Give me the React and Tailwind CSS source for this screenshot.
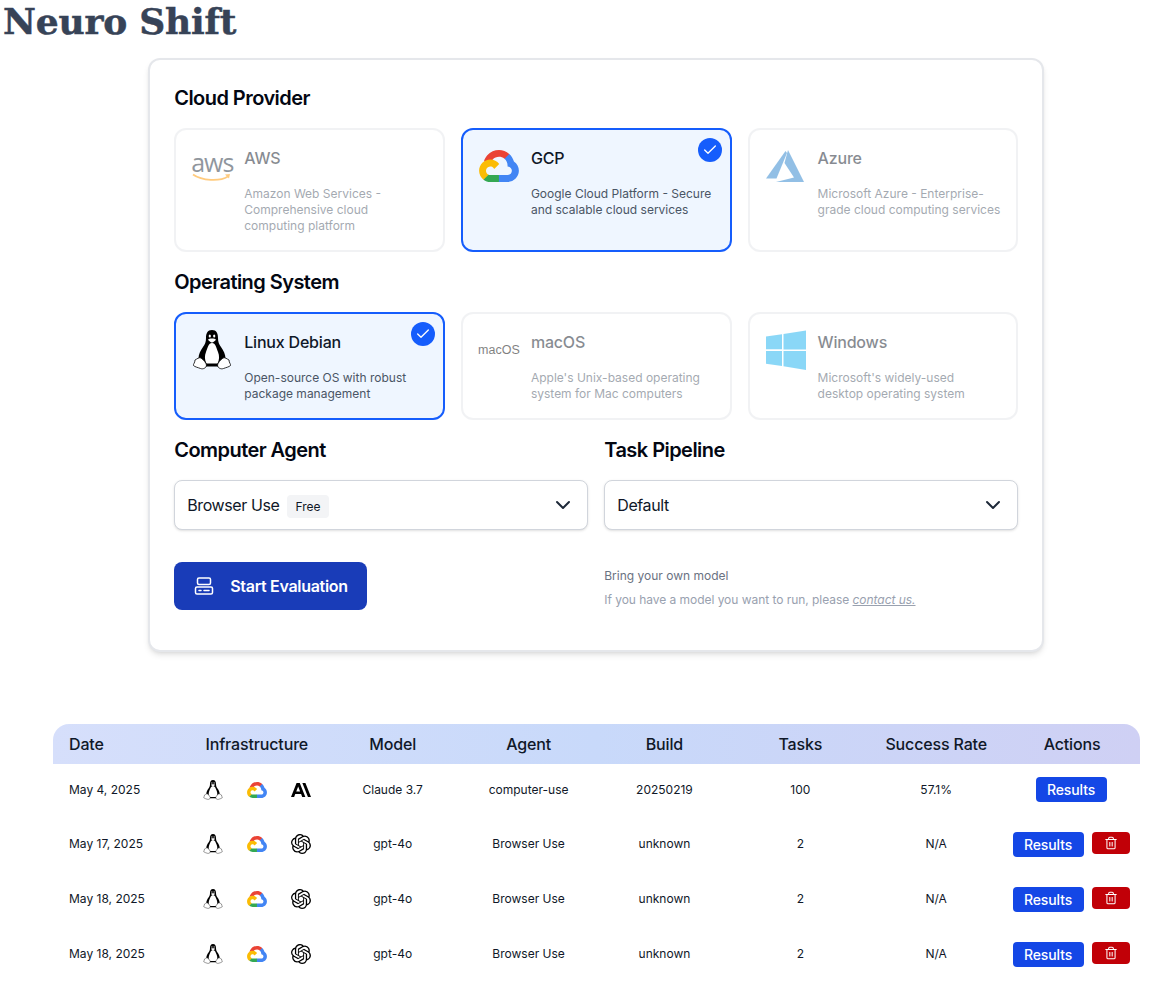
import React from "react";
import { ChevronDown, Check, Trash2 } from "lucide-react";
import { SiOpenai } from "react-icons/si";

function Gcp({ className }) {
  return (
    <svg viewBox="0 0 256 206" className={className}>
      <path fill="#EA4335" d="M170.252 56.819l22.253-22.253 1.483-9.37C153.437-11.677 88.976-7.496 52.42 33.92 42.267 45.423 34.734 59.764 30.717 74.573l7.97-1.123 44.505-7.34 3.436-3.513c19.797-21.742 53.27-24.667 76.128-6.168l7.496.39z" />
      <path fill="#4285F4" d="M224.205 73.918c-5.115-18.836-15.616-35.769-30.217-48.722l-31.232 31.232c13.188 10.776 20.701 27.01 20.379 44.037v5.544c15.351 0 27.797 12.445 27.797 27.796 0 15.352-12.446 27.485-27.797 27.485h-55.671l-5.466 5.934v33.34l5.466 5.231h55.671c39.93.311 72.552-31.494 72.863-71.424.188-24.203-11.745-46.893-31.793-60.453" />
      <path fill="#34A853" d="M71.87 205.796h55.593V161.29H71.87c-3.961-.001-7.797-.852-11.399-2.498l-7.887 2.42-22.409 22.253-1.952 7.574c12.567 9.489 27.9 14.825 43.647 14.757" />
      <path fill="#FBBC05" d="M71.87 61.425C31.939 61.664-.237 94.228.001 134.159c.133 22.298 10.547 43.288 28.222 56.88l32.248-32.247c-13.991-6.321-20.208-22.786-13.887-36.776 6.32-13.99 22.786-20.207 36.775-13.887 6.161 2.784 11.096 7.72 13.887 13.887l32.248-32.248c-13.72-17.937-35.04-28.424-57.624-28.343" />
    </svg>
  );
}

function Tux({ className, small }) {
  return (
    <svg viewBox="0 0 40 40" className={className}>
      <path fill="#000" d="M20 0C15.500 0 14 3.500 14 8c0 4-1 6-3 9C8.500 20.500 6.500 24 6.500 29L10 36.500h20L33.500 29c0-5-2-8.500-4.500-12-2-3-3-5-3-9 0-4.500-1.500-8-6-8z" />
      <path fill="#fff" d={small
        ? "M20 12c-4 0-5.500 5-7.500 10-1.500 3.500-1.500 8 .5 12h14c2-4 2-8.500.5-12C25.500 17 24 12 20 12z"
        : "M20 13c-3.500 0-4.500 5-6 9-1.500 3.500-1.500 8 .5 11.500h11c2-3.500 2-8 .5-11.500C24.500 18 23.500 13 20 13z"} />
      <path fill="#fff" d="M16.200 9.500c1-1.200 6.600-1.200 7.600 0 .4.900-2.800 3-3.800 3s-4.200-2.100-3.800-3z" />
      <ellipse cx="17.800" cy="6" rx="1.100" ry="1.500" fill="#fff" />
      <ellipse cx="22.200" cy="6" rx="1.100" ry="1.500" fill="#fff" />
      <path fill="#fff" stroke="#000" strokeWidth="0.800" d="M3 30c2-1 4-3 6-2 3 2 5 5 5.500 7 0 3-3.500 4.500-6 3.500-2.500-1-5.500-1.500-7-3-.5-1.500 1.500-2.500 1.500-5.500z" />
      <path fill="#fff" stroke="#000" strokeWidth="0.800" d="M37 30c-2-1-4-3-6-2-3 2-5 5-5.500 7 0 3 3.500 4.500 6 3.500 2.500-1 5.500-1.500 7-3 .5-1.500-1.500-2.500-1.500-5.500z" />
    </svg>
  );
}

function Anthropic({ className }) {
  return (
    <svg viewBox="0 3 24 18" className={className} fill="#000">
      <path d="M17.3041 3.541h-3.6718l6.696 16.918H24Zm-10.6082 0L0 20.459h3.7442l1.3693-3.5527h7.0052l1.3693 3.5528h3.7442L10.5363 3.5409Zm-.3712 10.2232 2.2914-5.9456 2.2914 5.9456Z" />
    </svg>
  );
}

function Aws() {
  return (
    <div className="flex flex-col items-center">
      <span className="text-[25px] leading-[22px] tracking-[-1px] text-[#232f3e] font-['Open_Sans',sans-serif]">aws</span>
      <svg viewBox="0 0 40 9" className="w-10 h-[9px]">
        <path d="M1 1.500C10 8 28 8.500 36 3.500" fill="none" stroke="#f90" strokeWidth="1.800" />
        <path d="M33 1.500l5-.5-1 4.500z" fill="#f90" />
      </svg>
    </div>
  );
}

function Azure() {
  return (
    <svg viewBox="0 0 39 32" className="w-[39px] h-8">
      <path fill="#2781cd" d="M19.500 1L0 28.500h10.500L21 3z" />
      <path fill="#2781cd" d="M22 0l16 32H10l18-4.500L18.500 13z" />
    </svg>
  );
}

function Windows() {
  return (
    <svg viewBox="0 0 40 40" className="w-10 h-10">
      <path fill="#18b1f1" d="M0 6.500l16-2.200v15H0zM17.500 4.100L40 .500v19H17.500zM0 21h16v15L0 33.700zM17.500 21H40v19l-22.500-3.700z" />
    </svg>
  );
}

function Tile({ icon, title, desc, selected }) {
  return (
    <div className={selected
      ? "relative flex rounded-xl border-2 border-blue-600 bg-blue-50 p-4"
      : "relative flex rounded-xl border-2 border-gray-200 bg-white p-4 opacity-50"}>
      <div className="w-10 h-10 mr-3 shrink-0 flex items-center justify-center">{icon}</div>
      <div>
        <div className="text-base font-medium tracking-[-0.2px] text-gray-900 mb-4">{title}</div>
        <p className="text-xs text-gray-600">{desc}</p>
      </div>
      {selected && (
        <div className="absolute top-2 right-2 w-6 h-6 rounded-full bg-blue-600 flex items-center justify-center">
          <Check className="w-4 h-4 text-white" strokeWidth={2} />
        </div>
      )}
    </div>
  );
}

function Heading({ children, className = "" }) {
  return <h2 className={"text-xl font-semibold tracking-[-0.55px] text-gray-950 " + className}>{children}</h2>;
}

function Select({ children }) {
  return (
    <div className="h-[50px] rounded-lg border border-gray-300 bg-white shadow-sm px-3 flex items-center justify-between">
      <div className="flex items-center gap-2 text-base tracking-[-0.4px] text-gray-900">{children}</div>
      <ChevronDown className="w-6 h-6 text-gray-800" strokeWidth={2} />
    </div>
  );
}

const rows = [
  { date: "May 4, 2025", logo: "a", model: "Claude 3.7", agent: "computer-use", build: "20250219", tasks: "100", rate: "57.1%", del: false },
  { date: "May 17, 2025", logo: "o", model: "gpt-4o", agent: "Browser Use", build: "unknown", tasks: "2", rate: "N/A", del: true },
  { date: "May 18, 2025", logo: "o", model: "gpt-4o", agent: "Browser Use", build: "unknown", tasks: "2", rate: "N/A", del: true },
  { date: "May 18, 2025", logo: "o", model: "gpt-4o", agent: "Browser Use", build: "unknown", tasks: "2", rate: "N/A", del: true },
];

function Row({ r, first }) {
  const h = first ? "h-[26px] " : "h-6 ";
  const cell = h + "flex items-center justify-center";
  return (
    <div className="grid grid-cols-8 h-[55px] pt-[13px] text-xs text-gray-900">
      <div className={h + "flex items-center pl-4"}>{r.date}</div>
      <div className={cell + " gap-6"}>
        <Tux small className="w-5 h-5" />
        <Gcp className="w-5 h-4" />
        {r.logo === "a" ? <Anthropic className="w-5 h-4" /> : <SiOpenai className="w-5 h-5 text-black" />}
      </div>
      <div className={cell}>{r.model}</div>
      <div className={cell}>{r.agent}</div>
      <div className={cell}>{r.build}</div>
      <div className={cell}>{r.tasks}</div>
      <div className={cell}>{r.rate}</div>
      <div className="flex items-start justify-center gap-2 pr-0.5">
        <button className="h-[25px] w-[71px] rounded bg-blue-700 text-white text-sm font-medium tracking-[-0.1px]">Results</button>
        {r.del && (
          <button className="h-[22px] w-[38px] rounded bg-red-700 text-white flex items-center justify-center">
            <Trash2 className="w-3.5 h-3.5" strokeWidth={1.75} />
          </button>
        )}
      </div>
    </div>
  );
}

export default function App() {
  return (
    <div className="font-['Inter',sans-serif] bg-white min-h-[984px]">
      <h1 className="pl-[3px] text-[36px] leading-[42px] tracking-[-0.2px] font-bold text-[#374357] [-webkit-text-stroke:0.5px_#374357] font-['DejaVu_Serif',serif]">Neuro Shift</h1>
      <div className="mt-4 pl-[24.5px] flex justify-center">
        <div className="w-[896px] rounded-xl border-2 border-gray-200 bg-white p-6 shadow-md">
          <Heading className="mt-0 mb-4">Cloud Provider</Heading>
          <div className="grid grid-cols-3 gap-4">
            <Tile icon={<Aws />} title="AWS" desc="Amazon Web Services - Comprehensive cloud computing platform" />
            <Tile selected icon={<Gcp className="w-10 h-8" />} title="GCP" desc="Google Cloud Platform - Secure and scalable cloud services" />
            <Tile icon={<Azure />} title="Azure" desc="Microsoft Azure - Enterprise-grade cloud computing services" />
          </div>
          <Heading className="mt-4 mb-4">Operating System</Heading>
          <div className="grid grid-cols-3 gap-4">
            <Tile selected icon={<Tux className="w-10 h-10" />} title="Linux Debian" desc="Open-source OS with robust package management" />
            <Tile icon={<span className="text-[12.5px] text-black font-['Liberation_Sans',sans-serif]">macOS</span>} title="macOS" desc="Apple's Unix-based operating system for Mac computers" />
            <Tile icon={<Windows />} title="Windows" desc="Microsoft's widely-used desktop operating system" />
          </div>
          <div className="grid grid-cols-2 gap-4 mt-4">
            <div>
              <Heading className="mb-4">Computer Agent</Heading>
              <Select>
                <span>Browser Use</span>
                <span className="h-[23px] px-2 mt-[3px] rounded bg-gray-100 text-xs tracking-normal flex items-center">Free</span>
              </Select>
            </div>
            <div>
              <Heading className="mb-4">Task Pipeline</Heading>
              <Select><span>Default</span></Select>
            </div>
          </div>
          <div className="grid grid-cols-2 gap-4 mt-8 mb-4">
            <div>
              <button className="h-12 w-[193px] pl-5 rounded-lg bg-blue-800 text-white font-semibold text-base whitespace-nowrap tracking-[-0.3px] flex items-center gap-4">
                <svg viewBox="0 0 20 20" className="w-5 h-5" fill="none" stroke="currentColor" strokeWidth="1.500" strokeLinecap="round">
                  <rect x="3.500" y="2" width="13" height="6.500" rx="1.500" />
                  <rect x="1.500" y="11" width="17" height="7" rx="1.500" />
                  <path d="M5 14.500h2M10 14.500h5" />
                </svg>
                Start Evaluation
              </button>
            </div>
            <div className="text-xs pt-1.5">
              <p className="text-gray-500">Bring your own model</p>
              <p className="text-gray-400 mt-2 tracking-[-0.04px]">If you have a model you want to run, please <a className="italic underline">contact us.</a></p>
            </div>
          </div>
        </div>
      </div>
      <div className="mt-[72px] ml-[53px] w-[1087px]">
        <div className="grid grid-cols-8 h-10 items-center rounded-t-2xl bg-linear-to-r from-[#d6dffb] via-[#c8d9fa] to-[#cfd0f4] text-base font-medium tracking-[-0.15px] text-gray-900 text-center">
          <div className="text-left pl-4">Date</div>
          <div>Infrastructure</div>
          <div>Model</div>
          <div>Agent</div>
          <div>Build</div>
          <div>Tasks</div>
          <div>Success Rate</div>
          <div>Actions</div>
        </div>
        {rows.map((r, i) => <Row key={i} r={r} first={i === 0} />)}
      </div>
    </div>
  );
}
